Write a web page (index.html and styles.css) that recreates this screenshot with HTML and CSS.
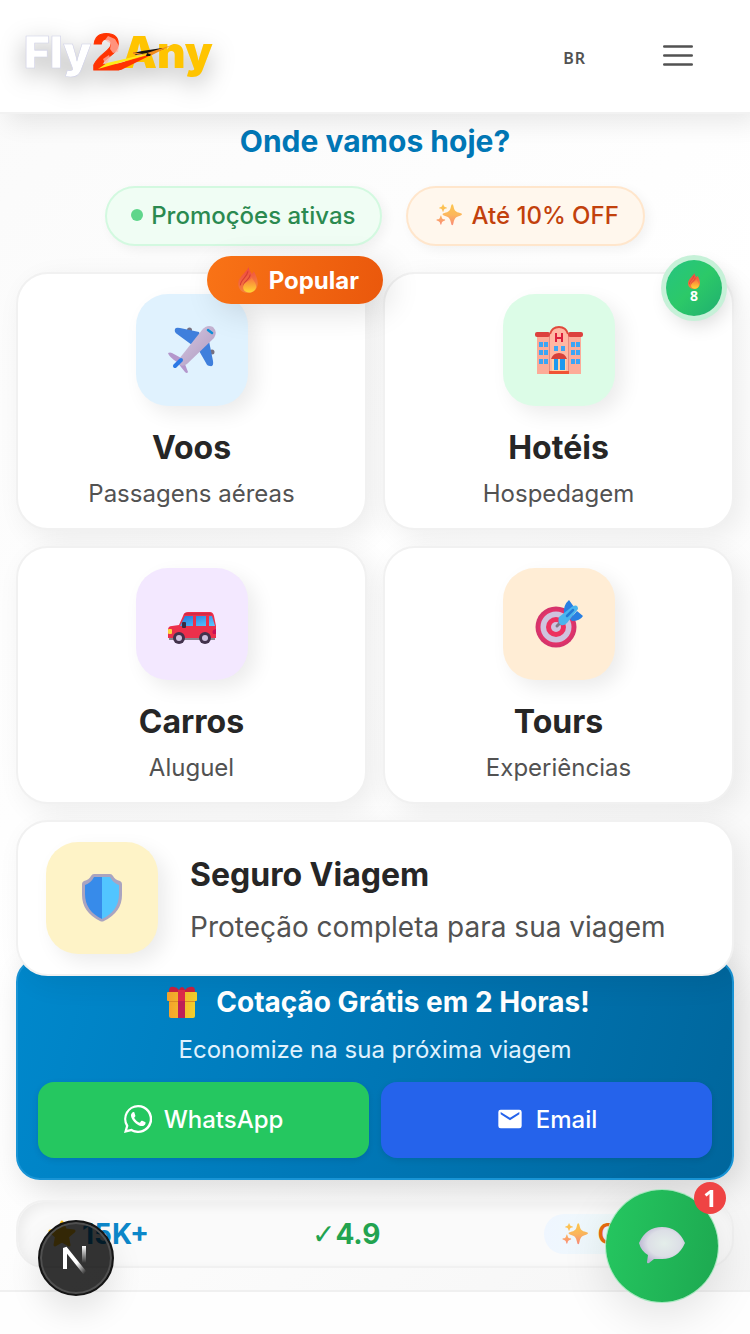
FILE: index.html
```html
<!DOCTYPE html>
<html lang="pt-BR">
<head>
<meta charset="utf-8">
<meta name="viewport" content="width=device-width, initial-scale=1">
<title>Fly2Any</title>
<link rel="stylesheet" href="styles.css">
</head>
<body>
<svg class="defs" width="0" height="0" aria-hidden="true">
  <defs>
    <linearGradient id="gSpark" x1="0" y1="0" x2="0" y2="1"><stop offset="0" stop-color="#fcc64e"/><stop offset=".5" stop-color="#fcb75c"/><stop offset="1" stop-color="#fa8a78"/></linearGradient>
    <linearGradient id="gFlame" x1="0" y1="0" x2=".3" y2="1"><stop offset="0" stop-color="#ee3b45"/><stop offset="1" stop-color="#f5883c"/></linearGradient>
    <linearGradient id="gFlameIn" x1="0" y1="0" x2="0" y2="1"><stop offset="0" stop-color="#f9703c"/><stop offset="1" stop-color="#ffd833"/></linearGradient>
    <linearGradient id="gBody" x1="0" y1="0" x2="1" y2="1"><stop offset="0" stop-color="#d6c8e0"/><stop offset="1" stop-color="#ad98c0"/></linearGradient>
    <linearGradient id="gGlass" x1="0" y1="0" x2="1" y2="1"><stop offset="0" stop-color="#1f78dc"/><stop offset="1" stop-color="#5cc8ff"/></linearGradient>
    <linearGradient id="gGift" x1="0" y1="0" x2="1" y2="0"><stop offset="0" stop-color="#f5a32b"/><stop offset="1" stop-color="#f3d02c"/></linearGradient>
    <radialGradient id="gBubble" cx=".55" cy=".45" r=".6"><stop offset="0" stop-color="#e4eeea"/><stop offset=".6" stop-color="#dcdfe6"/><stop offset="1" stop-color="#b5afcf"/></radialGradient>
    <linearGradient id="gN1" x1="0" y1="0" x2="1" y2="1"><stop offset=".6" stop-color="#fff"/><stop offset="1" stop-color="#fff" stop-opacity="0"/></linearGradient>
    <linearGradient id="gN2" x1="0" y1="0" x2="0" y2="1"><stop offset="0" stop-color="#fff"/><stop offset="1" stop-color="#fff" stop-opacity="0"/></linearGradient>
    <symbol id="spark" viewBox="0 0 24 24"><path fill="url(#gSpark)" d="M15 2q.8 0 1.200 2.200c.8 4 2 5 6 6q1.800.5 1.800 1.200t-1.800 1.200c-4 1-5.200 2.500-6 6.500q-.4 2.400-1.200 2.400t-1.200-2.400c-.8-4-2-5.500-6-6.500q-1.800-.5-1.800-1.200t1.800-1.200c4-1 5.200-2 6-6Q14.200 2 15 2ZM6.500 2q.3 0 .5.800c.3 1.400.8 1.800 2.200 2.100q.8.200.8.600t-.8.600c-1.400.3-1.900.8-2.200 2.200q-.2.800-.5.800T6 8.300C5.700 6.900 5.200 6.400 3.800 6.100Q3 5.900 3 5.500t.8-.6C5.200 4.600 5.700 4.200 6 2.800Q6.200 2 6.500 2ZM4.500 12.500q.4 0 .6 1c.3 1.600 1 2.200 2.500 2.500q.9.300.9.700t-.9.700c-1.500.4-2.200 1-2.500 2.600q-.2 1-.6 1t-.6-1c-.3-1.600-1-2.200-2.500-2.600Q.4 17.100.4 16.700t1-.7c1.500-.3 2.200-.9 2.500-2.500q.2-1 .6-1Z"/></symbol>
    <symbol id="flame" viewBox="0 0 24 24"><path fill="url(#gFlame)" d="M12.500 0c.2 2.500 1.800 4.300 3.200 6.500l1.700-2.400c2 3.500 3.600 7.300 3.600 10.900C21 20 17.500 24 12 24S3 20.500 3 15.500c0-3.500 2-6 4.500-8.700C9.500 4.200 11.500 3 12.500 0Z"/><path fill="none" stroke="#d63d35" stroke-width="1" d="M5 17c-.5-5 6-7 7-13M8 18c-1-5 6-6 6-11"/><path fill="url(#gFlameIn)" d="M15.500 9c.5 3 4 5 4 9 0 3.500-3 5.500-6.500 5.500S7.500 21.500 7.500 18.500c0-3.500 3-4 4.500-5.500 1.500-1 3-2 3.500-4Z"/></symbol>
  </defs>
</svg>

<header class="topbar">
  <a class="logo" href="#" aria-label="Fly2Any">
    <svg width="192" height="56" viewBox="0 0 192 56">
      <g class="logo-text">
        <text x="0" y="40" fill="#fff" stroke="#cfd0e6" stroke-width=".6">Fly</text>
        <text x="98" y="40" fill="#ffc400">Any</text>
        <text class="logo-two" x="68" y="42" fill="#ff3300" stroke="#ff3300" stroke-width="1">2</text>
      </g>
      <path fill="#ffb3a6" d="m84 8 7 3 4 7-1 6-5 1-3-4 1-5-6-4ZM79 31l6-4 1 3-4 7Z" opacity=".75"/>
      <path fill="#ff3300" d="m71 42 60-17-34 17Z"/>
      <path fill="#ffec19" d="m74 41 9-6 52-12-40 12Z"/>
      <path fill="#17120f" d="m109 25 9-2 20-3 2 1-12 4-2 3h-4l1-3-11 2Z"/>
      <path fill="#f28c1c" d="m123 25 25-8-12 6-8 4ZM109 24l14 3-14-1Z"/>
    </svg>
  </a>
  <nav class="tools">
    <button class="lang" type="button">BR</button>
    <button class="menu" type="button" aria-label="Menu">
      <svg width="32" height="32" viewBox="0 0 32 32" stroke="#525252" stroke-width="2.400" stroke-linecap="round"><path d="M2.200 6.500h27.600M2.200 15.500h27.600M2.200 24.500h27.600"/></svg>
    </button>
  </nav>
</header>

<main class="page">
  <h1 class="headline">Onde vamos hoje?</h1>
  <div class="pills">
    <span class="pill pill-green"><i class="dot"></i>Promoções ativas</span>
    <span class="pill pill-orange"><svg class="icon-sm" aria-hidden="true"><use href="#spark"/></svg>Até 10% OFF</span>
  </div>

  <div class="services">
    <a class="card" href="#">
      <span class="popular"><svg class="icon-sm" aria-hidden="true"><use href="#flame"/></svg>Popular</span>
      <span class="tile sky">
        <svg class="emoji" viewBox="0 0 48 48" aria-hidden="true">
          <circle cx="21.500" cy="4" r="2.500" fill="#77707f"/><circle cx="44" cy="26" r="2.500" fill="#77707f"/>
          <path fill="#3f7fdc" d="M7 3Q8 1 12 2l19 4 3 9-10 4L9 8Q6 6 7 3ZM34 16l7-1 4 20q1 6-3 5-3 0-4-3l-8-14Z"/>
          <path fill="#b497cc" d="m0 27q2-1 4 0l11 6 5 13q-1 2-3 0L9 36Q1 31 0 27Z"/>
          <path fill="url(#gBody)" d="M11 33 34 4q5-6 11-3 5 5 1 11L19 38q-4 3-7 1-3-2-1-6Z"/>
          <path stroke="#2b79e5" stroke-width="4" stroke-linecap="round" d="m7 40 6-6"/>
          <path stroke="#0b8fd5" stroke-width="2.500" stroke-linecap="round" d="m40 4 4 3"/>
        </svg>
      </span>
      <strong class="name">Voos</strong>
      <span class="note">Passagens aéreas</span>
    </a>

    <a class="card" href="#">
      <span class="count"><svg class="icon-xs" aria-hidden="true"><use href="#flame"/></svg>8</span>
      <span class="tile mint">
        <svg class="emoji" viewBox="0 0 48 48" aria-hidden="true">
          <path fill="#fdab98" d="M2 9h44v39H2Z"/>
          <path fill="#ffb7a3" d="M15 8q3-7 9-7t9 7v40H15Z"/>
          <path fill="#e58c80" d="M14 10h1v36h-1zM33 10h1v36h-1z"/>
          <rect y="6" width="15" height="5" rx="2" fill="#dc413e"/><rect x="33" y="6" width="15" height="5" rx="2" fill="#dc413e"/>
          <path fill="none" stroke="#e04a3c" stroke-width="2" d="M15 8q2-7 9-7t9 7"/>
          <path fill="none" stroke="#dc1f3c" stroke-width="2" d="M21 7v9m6-9v9m-6-4h6"/>
          <path fill="#3ba5f5" d="M4 16h4v5H4zm5 0h4v5H9zm-5 8h4v5H4zm5 0h4v5H9zm-5 9h4v5H4zm5 0h4v5H9zM36 16h4v5h-4zm5 0h4v5h-4zm-5 8h4v5h-4zm5 0h4v5h-4zm-5 9h4v5h-4zm5 0h4v5h-4zM19 20h4v5h-4zm7 0h4v5h-4z"/>
          <path fill="#ffd1a6" d="M17 32h14v13H17Z"/><path fill="#1e98ee" d="M19 33h4v11h-4zm6 0h5v11h-5z"/>
          <path fill="#d6413b" d="M16 33q2-6 8-6t8 6Z"/><path fill="#f05335" d="M14 45h20v3H14Z"/>
        </svg>
      </span>
      <strong class="name">Hotéis</strong>
      <span class="note">Hospedagem</span>
    </a>

    <a class="card" href="#">
      <span class="tile lilac">
        <svg class="emoji" viewBox="0 0 48 48" aria-hidden="true">
          <path fill="#8b8490" d="M1 36h46v4H1Z"/>
          <path fill="#ec2f4b" d="M0 30q0-4 4-4l7-1 4-9q1-4 5-4h22q3 0 4 4l2 10v12H0Z"/>
          <path fill="#d52a45" d="M17 13h26l1 2H16Z"/>
          <path fill="url(#gGlass)" d="M17 16h8v10H12ZM28 16h10v10h-10ZM41 16h3l3 10h-6Z"/>
          <rect x="14" y="22" width="4" height="6" rx="1" fill="#3a2a42"/>
          <rect y="29" width="4" height="5" rx="1" fill="#fcd53f"/><path fill="#c80f57" d="M48 29q-5 1-3 5h3Z"/>
          <circle cx="11" cy="38" r="6" fill="#42324c"/><circle cx="37" cy="38" r="6" fill="#42324c"/>
          <circle cx="11" cy="38" r="3" fill="#cdbfdc"/><circle cx="37" cy="38" r="3" fill="#cdbfdc"/>
        </svg>
      </span>
      <strong class="name">Carros</strong>
      <span class="note">Aluguel</span>
    </a>

    <a class="card" href="#">
      <span class="tile peach">
        <svg class="emoji" viewBox="0 0 48 48" aria-hidden="true">
          <circle cx="21" cy="27" r="20.500" fill="#d5346c"/><circle cx="21" cy="27" r="18" fill="#e23369"/><circle cx="21" cy="27" r="15.500" fill="#cfc3de"/><circle cx="21" cy="27" r="10" fill="#ee315f"/><circle cx="21" cy="27" r="5" fill="#cfc3de"/>
          <path stroke="#827786" stroke-width="3" stroke-linecap="round" d="m22 26 5-5"/>
          <path fill="#287fe2" d="M29 14q-1-9 5-14l5 7-1 9ZM35 19l7-8 6 5q-3 5-11 5Z"/>
          <path fill="#4ab5ee" d="M24 17 38 6q5-2 5 3L32 23q-3 3-6 2-4-3-2-8Z"/>
          <path stroke="#237bd8" stroke-width="2.500" stroke-linecap="round" d="m32 16 6-6"/>
        </svg>
      </span>
      <strong class="name">Tours</strong>
      <span class="note">Experiências</span>
    </a>

    <a class="card card-wide" href="#">
      <span class="tile butter">
        <svg class="emoji" viewBox="0 0 48 48" aria-hidden="true">
          <path fill="#aaa4c0" d="M16 0h16q2 0 3 2 2 4 7 5 2 1 2 3v11q0 17-18 26-2 1-4 0Q4 38 4 21V10q0-2 2-3 5-1 7-5 1-2 3-2Z"/>
          <path fill="#378bea" d="M16 3h8v42Q7 37 7 20v-9q6-2 9-8Z"/><path fill="#52c5ff" d="M24 3h8q3 6 9 8v9q0 17-17 25Z"/>
        </svg>
      </span>
      <span class="wide-text">
        <strong class="name">Seguro Viagem</strong>
        <span class="note">Proteção completa para sua viagem</span>
      </span>
    </a>
  </div>

  <section class="quote">
    <h2 class="quote-title">
      <svg width="32" height="32" viewBox="0 0 32 32" aria-hidden="true">
        <path fill="#c9213f" d="M3 5q0-5 5-4 3 0 5 3 1-3 3-3t3 3q2-3 5-3 5-1 5 4v3H3Z"/>
        <path fill="url(#gGift)" d="M3 12h26v18q0 2-2 2H5q-2 0-2-2Z"/><rect x="1" y="6" width="30" height="9" rx="1" fill="url(#gGift)"/>
        <path fill="#dc8b24" d="M3 15h26v1H3z"/><path fill="#be1f58" d="M12 6h7v26h-7Z"/><path fill="#de2a4b" d="M12 4h7v11h-7Z"/>
      </svg>
      Cotação Grátis em 2 Horas!
    </h2>
    <p class="quote-note">Economize na sua próxima viagem</p>
    <div class="actions">
      <button class="action whatsapp" type="button">
        <svg width="28" height="28" viewBox="0 0 24 24" fill="#fff" aria-hidden="true"><path d="M12 0a12 12 0 0 0-10.300 18L0 24l6.200-1.600A12 12 0 1 0 12 0Zm0 2a10 10 0 1 1-5.500 18.300l-3.700 1 1-3.600A10 10 0 0 1 12 2Z"/><path d="M8.200 6c-.5 0-1 .3-1.400.8-.6.700-.9 1.500-.8 2.600.2 2 2 4.500 4.200 6.400 2 1.600 4.600 2.600 6.300 2.100 1.300-.4 2-1.300 2-2.600 0-.3-.2-.5-.5-.7l-2.300-1.100c-.4-.2-.7-.1-1 .3l-.9 1.100c-.2.300-.5.300-.9.100-1.700-.7-3-2-4-3.600-.2-.3-.1-.6.1-.8l.6-.8c.2-.3.2-.5.100-.8L8.900 6.500C8.700 6.100 8.500 6 8.200 6Z"/></svg>
        WhatsApp
      </button>
      <button class="action email" type="button">
        <svg width="28" height="28" viewBox="0 0 24 24" fill="#fff" aria-hidden="true"><path d="M20 4H4a2 2 0 0 0-2 2v12a2 2 0 0 0 2 2h16a2 2 0 0 0 2-2V6a2 2 0 0 0-2-2Zm0 4-8 5-8-5V6l8 5 8-5Z"/></svg>
        Email
      </button>
    </div>
  </section>

  <div class="stats">
    <span class="stat blue"><svg width="28" height="28" viewBox="0 0 28 28" aria-hidden="true"><path fill="#fcc21f" stroke="#fcc21f" stroke-width="3" stroke-linejoin="round" d="m14 2 3.500 8 8.500 1-6.500 5.500L21 25l-7-4-7 4 1.500-8.500L2 11l8.500-1Z"/></svg>15K+</span>
    <span class="stat green"><span><span class="check">✓</span>4.9</span></span>
    <span class="stat stat-pill"><svg class="icon-sm" aria-hidden="true"><use href="#spark"/></svg>Grátis</span>
  </div>
</main>

<footer class="below"></footer>

<button class="dev" type="button" aria-label="Next.js">
  <svg width="40" height="40" viewBox="0 0 40 40" fill="none" aria-hidden="true"><path stroke="url(#gN1)" stroke-width="4" stroke-linejoin="bevel" d="M9 31V10l20 25"/><path fill="url(#gN2)" d="M26 8h4v17h-4z"/></svg>
</button>
<button class="chat" type="button" aria-label="Chat">
  <svg width="48" height="40" viewBox="0 0 48 40" aria-hidden="true"><path fill="url(#gBubble)" d="M1 17Q8 1 24 1t23 16Q40 33 24 33q-5 0-8 0l-5 4q-2 1-2-1l1-7Q3 25 1 17Z"/></svg>
  <span class="unread">1</span>
</button>
</body>
</html>
```
FILE: styles.css
```css
* { box-sizing: border-box; }

body {
  margin: 0;
  min-height: 100vh;
  display: flex;
  flex-direction: column;
  overflow: hidden;
  font-family: Inter, "Liberation Sans", sans-serif;
  color: #262626;
  background: linear-gradient(135deg, #fafafa, #fff 50%, #f5f5f5);
}

button { border: 0; padding: 0; background: none; font: inherit; color: inherit; }
a { color: inherit; text-decoration: none; }
h1, h2, p { margin: 0; }
svg { flex: none; }
.defs { position: absolute; }

.topbar {
  height: 114px;
  padding: 0 48px 0 24px;
  display: flex;
  align-items: center;
  justify-content: space-between;
  background: #fff;
  border-bottom: 2px solid #f2f2f2;
  box-shadow: 8px 8px 24px rgba(0, 0, 0, .09);
  position: relative;
}
.logo svg { display: block; overflow: visible; filter: drop-shadow(0 8px 12px rgba(0, 0, 0, .3)); }
.logo-text { font-family: Inter, sans-serif; font-size: 44px; font-weight: 900; }
.logo-two { font-family: "Liberation Sans", sans-serif; font-size: 52px; font-weight: 700; }
.tools { display: flex; align-items: center; gap: 68px; }
.lang { font: 600 16px/24px "Noto Sans", sans-serif; color: #525252; letter-spacing: 1px; padding-top: 4px; }
.menu { width: 48px; height: 48px; display: grid; place-items: center; }

.page { padding: 7px 16px 22px; }
.headline { font-size: 30px; line-height: 40px; font-weight: 700; text-align: center; color: #0077b6; }

.pills { display: flex; justify-content: center; gap: 24px; margin: 25px 0 26px; }
.pill {
  height: 60px;
  padding: 0 24px 2px;
  display: flex;
  align-items: center;
  gap: 8px;
  border: 2px solid;
  border-radius: 30px;
  font-size: 24px;
  font-weight: 500;
  box-shadow: 4px 4px 12px rgba(0, 0, 0, .05);
}
.pill-green { background: #f0fdf4; border-color: #d3f9e0; color: #2b8a50; }
.pill-orange { background: #fff7ed; border-color: #ffe6cc; color: #c2410c; padding-left: 28px; }
.dot { width: 12px; height: 12px; border-radius: 50%; background: #5fd68b; }
.icon-sm { width: 26px; height: 26px; }
.pill-orange .icon-sm { margin-right: 2px; }
.icon-xs { width: 16px; height: 16px; }

.services { position: relative; z-index: 1; display: grid; grid-template-columns: 1fr 1fr; gap: 16px; }
.card {
  position: relative;
  padding: 20px 20px 18px;
  display: flex;
  flex-direction: column;
  align-items: center;
  background: #fff;
  border: 2px solid #f1f1f1;
  border-radius: 32px;
  box-shadow: 8px 8px 28px rgba(0, 0, 0, .07);
}
.tile {
  width: 112px;
  height: 112px;
  flex: none;
  display: grid;
  place-items: center;
  border-radius: 32px;
  box-shadow: 8px 8px 20px rgba(0, 0, 0, .08);
}
.emoji { width: 48px; height: 48px; }
.sky { background: #e0f2fe; }
.mint { background: #dcfce7; }
.lilac { background: #f3e8ff; }
.peach { background: #ffedd5; }
.butter { background: #fef3c7; }
.name { margin-top: 22px; font-size: 32px; line-height: 40px; font-weight: 700; }
.note { margin-top: 10px; font-size: 24px; line-height: 32px; color: #525252; }

.popular {
  position: absolute;
  z-index: 1;
  top: -18px;
  right: -18px;
  height: 48px;
  padding: 0 24px 0 28px;
  display: flex;
  align-items: center;
  gap: 8px;
  border-radius: 24px;
  background: linear-gradient(100deg, #f97316, #ea580c);
  color: #fff;
  font-size: 24px;
  font-weight: 700;
  box-shadow: 8px 8px 32px rgba(0, 0, 0, .12);
}
.count {
  position: absolute;
  top: -14px;
  right: 10px;
  width: 56px;
  height: 56px;
  display: flex;
  flex-direction: column;
  align-items: center;
  justify-content: center;
  border-radius: 50%;
  background: linear-gradient(135deg, #25c481, #2cc968 50%, #1fae70);
  color: #fff;
  font-family: "Noto Sans", sans-serif;
  font-size: 14px;
  line-height: 14px;
  font-weight: 700;
  box-shadow: 0 0 0 5px #c6f1d8, 4px 8px 20px rgba(0, 0, 0, .16);
}

.card-wide { grid-column: 1 / -1; flex-direction: row; gap: 32px; padding: 20px 28px; }
.wide-text { display: flex; flex-direction: column; gap: 12px; padding-top: 6px; }
.wide-text .name, .wide-text .note { margin-top: 0; }
.wide-text .note { font-size: 28px; line-height: 40px; }

.quote {
  margin-top: -18px;
  padding: 22px 20px 20px;
  border: 2px solid #1994d5;
  border-radius: 24px;
  background: linear-gradient(105deg, #0088cc, #0077b6 50%, #00669c);
  color: #fff;
  text-align: center;
  box-shadow: 8px 8px 32px rgba(0, 0, 0, .14);
}
.quote-title { display: flex; align-items: center; justify-content: center; gap: 18px; padding-left: 6px; font-size: 28px; line-height: 40px; font-weight: 700; }
.quote-note { margin: 12px 0 16px; font-size: 24px; line-height: 32px; color: #e0f2fe; }
.actions { display: grid; grid-template-columns: 1fr 1fr; gap: 12px; }
.action {
  height: 76px;
  padding-bottom: 2px;
  display: flex;
  align-items: center;
  justify-content: center;
  gap: 12px;
  border-radius: 16px;
  font-size: 24px;
  font-weight: 500;
  box-shadow: 0 2px 6px rgba(0, 0, 0, .1);
}
.whatsapp { background: #25c760; }
.email { background: #2563eb; }

.stats {
  margin-top: 20px;
  height: 68px;
  padding: 0 30px;
  display: flex;
  align-items: center;
  justify-content: space-between;
  border: 2px solid #f1f1f1;
  border-radius: 28px;
  background: #fafafa;
  box-shadow: inset 4px 4px 12px rgba(0, 0, 0, .06);
}
.stat { display: flex; align-items: center; gap: 6px; font-size: 28px; line-height: 32px; font-weight: 700; }
.check { font-family: "DejaVu Sans", sans-serif; }
.blue { color: #0c87c9; }
.green { color: #22a34f; }
.stat-pill { height: 40px; padding: 0 24px 0 18px; gap: 10px; border-radius: 20px; background: linear-gradient(90deg, #eff6ff, #f0fdf4); color: #ea6a10; font-weight: 600; }

.below { flex: 1; border-top: 2px solid #f0f0f0; background: #fefefe; }

.dev {
  position: fixed;
  left: 38px;
  bottom: 38px;
  width: 76px;
  height: 76px;
  display: grid;
  place-items: center;
  border: 2px solid #141414;
  border-radius: 50%;
  background: rgba(0, 0, 0, .8);
  box-shadow: inset 0 0 0 2px #505050, 0 16px 32px rgba(0, 0, 0, .1);
  z-index: 2;
}
.chat {
  position: fixed;
  right: 32px;
  bottom: 32px;
  width: 112px;
  height: 112px;
  display: grid;
  place-items: center;
  border-radius: 50%;
  background: linear-gradient(100deg, #25c760, #1da850);
  box-shadow: 0 0 0 1px #a9e8c1, 0 12px 48px rgba(0, 0, 0, .12);
  z-index: 2;
}
.unread {
  position: absolute;
  top: -8px;
  right: -8px;
  width: 32px;
  height: 32px;
  border-radius: 50%;
  background: #ef4444;
  color: #fff;
  font-family: "Noto Sans", sans-serif;
  font-size: 24px;
  line-height: 32px;
  font-weight: 700;
}
```
